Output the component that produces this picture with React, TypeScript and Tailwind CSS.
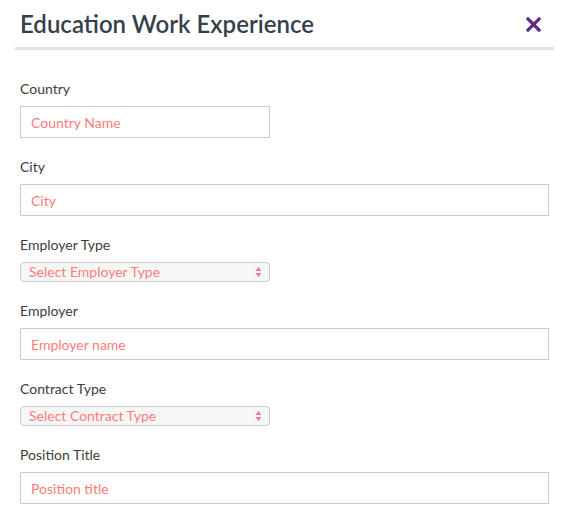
import React from "react";

// Form field definitions
const fields = [
  { label: "Country", kind: "input", placeholder: "Country Name", narrow: true },
  { label: "City", kind: "input", placeholder: "City" },
  { label: "Employer Type", kind: "select", placeholder: "Select Employer Type" },
  { label: "Employer", kind: "input", placeholder: "Employer name" },
  { label: "Contract Type", kind: "select", placeholder: "Select Contract Type" },
  { label: "Position Title", kind: "input", placeholder: "Position title" },
];

const SelectArrows = () => (
  <svg width="7" height="12" viewBox="0 0 7 12" className="shrink-0">
    <path d="M3.5 1 L6.5 5 L0.5 5 Z" fill="#ff7b7b" />
    <path d="M3.5 11 L6.5 7 L0.5 7 Z" fill="#ff7b7b" />
  </svg>
);

export default function App() {
  return (
    <div
      className="w-[569px] h-[524px] bg-white overflow-hidden"
      style={{ fontFamily: "Lato, 'Open Sans', sans-serif" }}
    >
      {/* Header */}
      <div className="mx-[15px] pl-[5px] pr-[13px] h-[50px] flex items-center justify-between border-b-[3px] border-[#e1e3e6]">
        <h1 className="text-[24px] font-semibold text-[#363f4a] leading-none mt-[1px]">
          Education Work Experience
        </h1>
        <button className="text-[#5f2b85] mt-[1px]" title="Close">
          <svg width="15" height="15" viewBox="0 0 15 15">
            <path
              d="M2 2 L13 13 M13 2 L2 13"
              stroke="currentColor"
              strokeWidth="3.2"
              strokeLinecap="square"
            />
          </svg>
        </button>
      </div>

      {/* Form */}
      <div className="pl-[20px] pr-[20px] pt-[29px] flex flex-col gap-[19px]">
        {fields.map((f) => (
          <div key={f.label} className="flex flex-col">
            <label className="text-[14px] leading-[20px] text-[#3d3d3d] mb-[7px]">
              {f.label}
            </label>
            {f.kind === "input" ? (
              <div
                className={`h-[32px] border border-[#cccccc] flex items-center px-[10px] text-[14px] text-[#ff7b7b] ${
                  f.narrow ? "w-[250px]" : "w-[529px]"
                }`}
              >
                {f.placeholder}
              </div>
            ) : (
              <div className="w-[250px] h-[20px] border border-[#cccccc] rounded-[4px] bg-[#f6f6f6] flex items-center justify-between pl-[8px] pr-[7px] text-[14px] text-[#ff7b7b]">
                <span className="leading-none">{f.placeholder}</span>
                <SelectArrows />
              </div>
            )}
          </div>
        ))}
      </div>
    </div>
  );
}
